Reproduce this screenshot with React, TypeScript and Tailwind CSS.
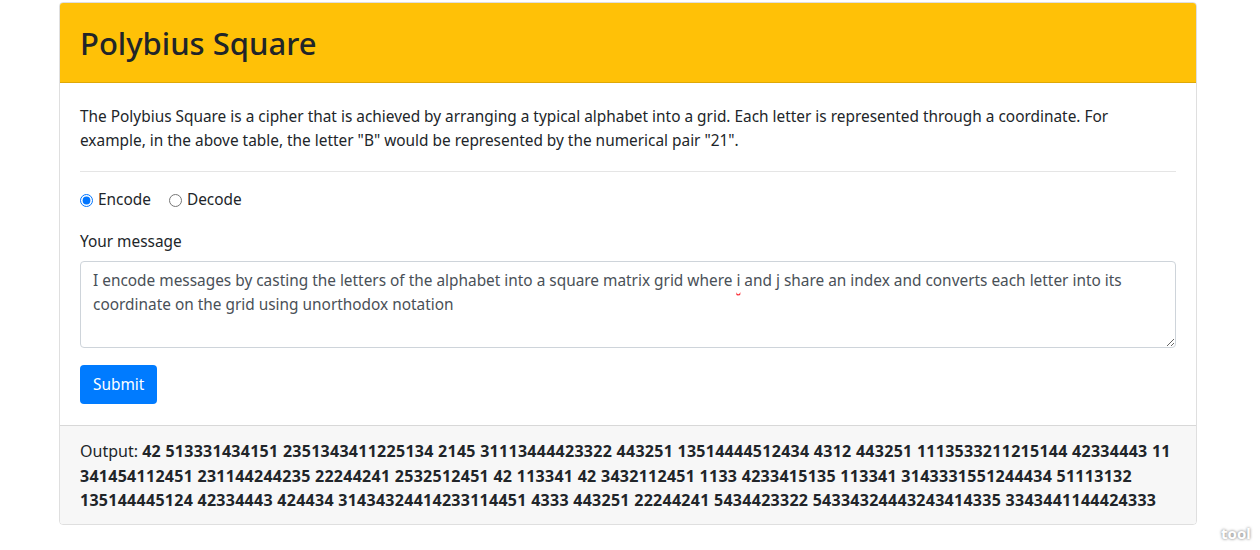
import React from "react";

const output = [
  "42 513331434151 2351343411225134 2145 31113444423322 443251 13514444512434 4312 443251 1113533211215144 42334443 11",
  "341454112451 231144244235 22244241 2532512451 42 113341 42 3432112451 1133 4233415135 113341 3143331551244434 51113132",
  "135144445124 42334443 424434 31434324414233114451 4333 443251 22244241 5434423322 54334324443243414335 3343441144424333",
];

export default function App() {
  return (
    <div className="relative min-h-[550px] bg-white pt-[2px] text-[15.4px] leading-6 text-[#212529]" style={{ fontFamily: '"Noto Sans", "Open Sans", sans-serif' }}>
      <div className="ml-[59px] w-[1138px] overflow-hidden rounded border border-black/[0.125]">
        {/* header */}
        <div className="h-[80px] border-b border-black/[0.125] bg-[#ffc107] px-5 pt-[21px]">
          <h1 className="text-[31px] font-medium leading-[38px]">Polybius Square</h1>
        </div>

        {/* body */}
        <div className="bg-white px-5 pb-[21px] pt-[22px]">
          <p className="whitespace-nowrap">
            The Polybius Square is a cipher that is achieved by arranging a typical alphabet into a grid. Each letter is represented through a coordinate. For
            <br />
            example, in the above table, the letter "B" would be represented by the numerical pair "21".
          </p>
          <hr className="mb-4 mt-[18px] border-black/10" />

          <div className="flex items-center gap-[18px]">
            <label className="flex items-center gap-[5px]">
              <input type="radio" name="mode" defaultChecked className="m-0 h-[13px] w-[13px]" />
              Encode
            </label>
            <label className="flex items-center gap-[5px]">
              <input type="radio" name="mode" className="m-0 h-[13px] w-[13px]" />
              Decode
            </label>
          </div>

          <div className="mt-[18px]">
            <div className="mb-[7px]">Your message</div>
            <div className="h-[87px] resize-y overflow-auto rounded border border-[#ced4da] px-3 py-[7px] text-[#495057]">
              <div className="whitespace-nowrap">
                I encode messages by casting the letters of the alphabet into a square matrix grid where{" "}
                <span className="underline decoration-red-500 decoration-wavy underline-offset-4">i</span> and j share an index and converts each letter into its
              </div>
              <div>coordinate on the grid using unorthodox notation</div>
            </div>
          </div>

          <button className="mt-[17px] h-[39px] rounded bg-[#007bff] px-[13px] text-white">Submit</button>
        </div>

        {/* footer */}
        <div className="border-t border-black/[0.125] bg-[#f7f7f7] px-5 pb-[11px] pt-[13px] text-[16px] leading-[24.5px]">
          <div className="whitespace-nowrap">
            Output: <b className="font-bold tracking-[0.27px]">{output[0]}</b>
          </div>
          {output.slice(1).map((line) => (
            <div key={line} className="whitespace-nowrap font-bold tracking-[0.27px]">
              {line}
            </div>
          ))}
        </div>
      </div>

      <div className="absolute left-[1221px] top-[521px] text-[15px] font-bold text-white [text-shadow:0_0_3px_rgba(0,0,0,0.6)]">tool</div>
    </div>
  );
}
